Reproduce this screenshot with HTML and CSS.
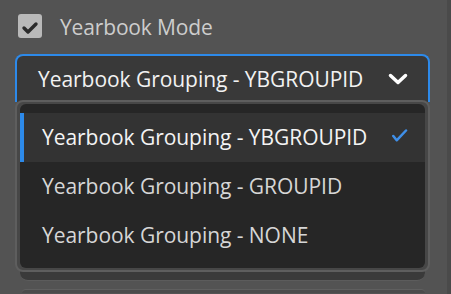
FILE: index.html
```html
<!DOCTYPE html>
<html lang="en">
<head>
    <meta charset="UTF-8">
    <title>Yearbook Mode</title>
    <link rel="stylesheet" href="styles.css">
</head>
<body>
    <div class="panel">
        <label class="check-row">
            <span class="checkbox">
                <svg width="24" height="24" viewBox="0 0 24 24"><polyline points="6,14 10,18 18,10" fill="none" stroke="#2b2b2b" stroke-width="3.4" stroke-linecap="round" stroke-linejoin="round"/></svg>
            </span>
            <span class="check-label">Yearbook Mode</span>
        </label>

        <div class="picker">
            <div class="picker-btn">
                <span class="picker-value">Yearbook Grouping - YBGROUPID</span>
                <svg class="chevron" width="20" height="12" viewBox="0 0 20 12"><polyline points="2.5,2.5 10,9.5 17.5,2.5" fill="none" stroke="#fff" stroke-width="3.5" stroke-linecap="round" stroke-linejoin="round"/></svg>
            </div>

            <!-- popup over the fields below -->
            <div class="menu">
                <ul class="menu-list">
                    <li class="item selected">
                        <span>Yearbook Grouping - YBGROUPID</span>
                        <svg class="tick" width="16" height="14" viewBox="0 0 16 14"><polyline points="1.3,7 4.7,11.3 14,1.5" fill="none" stroke="#3f8fe8" stroke-width="2.5" stroke-linecap="round" stroke-linejoin="round"/></svg>
                    </li>
                    <li class="item"><span>Yearbook Grouping - GROUPID</span></li>
                    <li class="item"><span>Yearbook Grouping - NONE</span></li>
                </ul>
            </div>
        </div>

        <div class="field"></div>
        <div class="field next"></div>
    </div>
    <div class="edge"></div>
</body>
</html>
```

FILE: styles.css
```css
html, body{
    margin: 0;
    height: 100%;
}
body{
    display: flex;
    background: #535353;
    font-family: "Open Sans", "Noto Sans", sans-serif;
    overflow: hidden;
}
.panel{
    flex: 1;
    padding: 14px 17px 0 15px;
}
.edge{
    width: 4px;
    background: #4a4a4a;
}

/* checkbox */
.check-row{
    display: flex;
    align-items: center;
    gap: 18px;
    margin-left: 3px;
    height: 24px;
}
.checkbox{
    width: 24px;
    height: 24px;
    border-radius: 3px;
    background: #b9b9b9;
    display: block;
}
.checkbox svg{
    display: block;
}
.check-label{
    color: #cdcdcd;
    font-size: 21px;
    line-height: 24px;
    letter-spacing: -0.15px;
    margin-top: 1px;
}

/* picker */
.picker{
    position: relative;
    margin-top: 16px;
}
.picker-btn{
    height: 46px;
    border: 2px solid #2d8aea;
    border-bottom: 0;
    border-radius: 8px 8px 0 0;
    background: #393939;
    display: flex;
    align-items: center;
    justify-content: space-between;
    padding: 0 20px 0 21px;
}
.picker-value{
    color: #f2f2f2;
    font-size: 21px;
    letter-spacing: -0.05px;
}
.chevron{
    display: block;
}

.menu{
    position: absolute;
    left: 0;
    right: 0;
    top: 46px;
    background: #474747;
    border: 2px solid #5e5e5e;
    border-radius: 8px;
    padding: 2px 3px;
    z-index: 2;
}
.menu-list{
    list-style: none;
    margin: 0;
    padding: 9px 0 8px;
    background: #262626;
    border-radius: 6px;
}
.item{
    height: 49px;
    display: flex;
    align-items: center;
    justify-content: space-between;
    padding: 0 17px 0 22px;
    color: #d6d6d6;
    font-size: 21px;
    letter-spacing: -0.05px;
}
.item span{
    margin-top: -1px;
}
.item.selected{
    background: #333333;
    color: #f4f4f4;
    box-shadow: inset 4px 0 0 #2d8aea;
}
.tick{
    display: block;
    margin-top: -4px;
}

/* fields under the popup */
.field{
    margin: 8px 5px 0;
    height: 170px;
    background: #3a3a3a;
    border-bottom: 1px solid #5c5c5c;
    border-radius: 0 0 8px 8px;
}
.field.next{
    margin-top: 8px;
    height: 3px;
    background: #4b4b4b;
    border-top: 1px solid #5f5f5f;
    border-bottom: 0;
    border-radius: 8px 8px 0 0;
    margin-left: 7px;
}
```
